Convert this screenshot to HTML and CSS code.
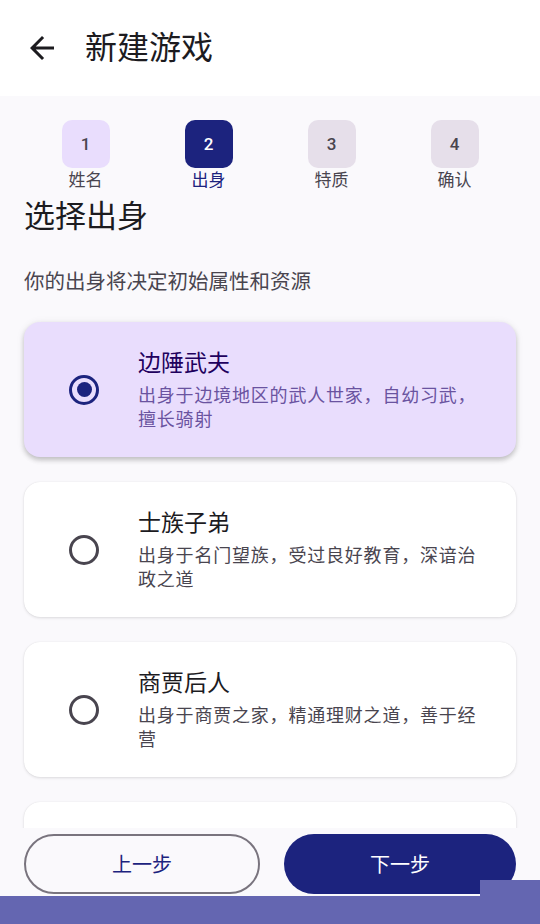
FILE: index.html
```html
<!DOCTYPE html>
<html lang="zh-CN">

<head>
    <meta charset="UTF-8">
    <meta name="viewport" content="width=device-width, initial-scale=1.0">
    <title>新建游戏</title>
    <link rel="stylesheet" href="styles.css">
</head>

<body>
    <div class="app">
        <!-- Top bar -->
        <header class="topbar">
            <button class="back" aria-label="返回">
                <svg viewBox="0 0 24 24" width="36" height="36">
                    <path d="M20 11H7.83l5.59-5.59L12 4l-8 8 8 8 1.41-1.41L7.83 13H20v-2z" fill="#1c1b1f" />
                </svg>
            </button>
            <h1>新建游戏</h1>
        </header>

        <main class="content">
            <!-- Steps -->
            <div class="steps">
                <div class="step done">
                    <div class="step-num">1</div>
                    <div class="step-label">姓名</div>
                </div>
                <div class="step active">
                    <div class="step-num">2</div>
                    <div class="step-label">出身</div>
                </div>
                <div class="step">
                    <div class="step-num">3</div>
                    <div class="step-label">特质</div>
                </div>
                <div class="step">
                    <div class="step-num">4</div>
                    <div class="step-label">确认</div>
                </div>
            </div>

            <h2 class="heading">选择出身</h2>
            <p class="subtitle">你的出身将决定初始属性和资源</p>

            <!-- Options -->
            <div class="options">
                <div class="option selected">
                    <span class="radio"></span>
                    <div class="option-text">
                        <div class="option-title">边陲武夫</div>
                        <div class="option-desc">出身于边境地区的武人世家，自幼习武，擅长骑射</div>
                    </div>
                </div>
                <div class="option">
                    <span class="radio"></span>
                    <div class="option-text">
                        <div class="option-title">士族子弟</div>
                        <div class="option-desc">出身于名门望族，受过良好教育，深谙治政之道</div>
                    </div>
                </div>
                <div class="option">
                    <span class="radio"></span>
                    <div class="option-text">
                        <div class="option-title">商贾后人</div>
                        <div class="option-desc">出身于商贾之家，精通理财之道，善于经营</div>
                    </div>
                </div>
                <!-- next option, scrolled below the fold -->
                <div class="option"></div>
            </div>
        </main>

        <!-- Bottom actions -->
        <footer class="actions">
            <button class="btn btn-outline">上一步</button>
            <button class="btn btn-filled">下一步</button>
        </footer>
        <div class="navbar"></div>
        <div class="navbar-glitch"></div>
    </div>
</body>

</html>
```

FILE: styles.css
```css
* {
    box-sizing: border-box;
}

body {
    margin: 0;
    font-family: Roboto, "Noto Sans CJK SC", sans-serif;
    background-color: #faf9fc;
    color: #1c1b1f;
}

.app {
    position: relative;
    width: 540px;
    height: 924px;
    display: flex;
    flex-direction: column;
    overflow: hidden;
}

.topbar {
    height: 96px;
    background: white;
    display: flex;
    align-items: center;
    padding-left: 24px;
    flex-shrink: 0;
}

.back {
    width: 36px;
    height: 36px;
    padding: 0;
    border: none;
    background: none;
    display: flex;
}

.topbar h1 {
    margin: 0 0 0 25px;
    font-size: 32px;
    font-weight: 400;
    line-height: 40px;
    color: #1c1b1f;
}

.content {
    flex: 1;
    overflow: hidden;
    padding: 24px 24px 0;
}

.steps {
    display: grid;
    grid-template-columns: repeat(4, 1fr);
}

.step {
    display: flex;
    flex-direction: column;
    align-items: center;
}

.step-num {
    width: 48px;
    height: 48px;
    border-radius: 10px;
    background: #e6dfea;
    color: #49454f;
    display: flex;
    align-items: center;
    justify-content: center;
    font-size: 17px;
    font-weight: 500;
}

.step.done .step-num {
    background: #e9ddfd;
}

.step.active .step-num {
    background: #1c237e;
    color: white;
}

.step-label {
    font-size: 17px;
    line-height: 24px;
    color: #49454f;
}

.step.active .step-label {
    color: #1c237e;
}

.heading {
    margin: 5px 0 0;
    font-size: 31px;
    font-weight: 400;
    line-height: 40px;
    color: #1c1b1f;
}

.subtitle {
    margin: 31px 0 0;
    font-size: 20.5px;
    line-height: 28px;
    color: #49454f;
}

.options {
    margin-top: 26px;
    display: flex;
    flex-direction: column;
    gap: 25px;
}

.option {
    height: 135px;
    flex-shrink: 0;
    background: white;
    border-radius: 16px;
    box-shadow: 0 1px 3px rgba(0, 0, 0, 0.12), 0 0 1px rgba(0, 0, 0, 0.1);
    display: flex;
    align-items: center;
    padding: 0 30px 0 45px;
}

.option.selected {
    background: #e9ddfd;
    box-shadow: 0 3px 5px rgba(0, 0, 0, 0.2), 0 1px 8px rgba(0, 0, 0, 0.08);
}

.radio {
    width: 30px;
    height: 30px;
    border-radius: 50%;
    border: 3px solid #49454f;
    flex-shrink: 0;
    position: relative;
}

.option.selected .radio {
    border-color: #1c237e;
}

.option.selected .radio::after {
    content: "";
    position: absolute;
    left: 4.5px;
    top: 4.5px;
    width: 15px;
    height: 15px;
    border-radius: 50%;
    background: #1c237e;
}

.option-text {
    margin-left: 39px;
}

.option-title {
    font-size: 23px;
    line-height: 32px;
    margin-bottom: 4px;
    color: #1c1b1f;
}

.option.selected .option-title {
    color: #21005d;
}

.option-desc {
    font-size: 18px;
    line-height: 24px;
    letter-spacing: 0.8px;
    color: #49454f;
}

.option.selected .option-desc {
    color: #6a53a0;
}

.actions {
    height: 68px;
    flex-shrink: 0;
    display: flex;
    gap: 24px;
    padding: 6px 24px 0;
    background: #faf9fc;
}

.btn {
    flex: 1 1 0;
    width: 0;
    height: 60px;
    padding: 0;
    border-radius: 30px;
    font-family: "Noto Sans CJK SC", sans-serif;
    font-size: 20px;
    line-height: 28px;
}

.btn-outline {
    background: transparent;
    border: 2px solid #79747e;
    color: #1c237e;
}

.btn-filled {
    background: #1c237e;
    border: none;
    color: white;
}

.navbar {
    height: 28px;
    flex-shrink: 0;
    background: #6466b1;
}

.navbar-glitch {
    position: absolute;
    right: 0;
    bottom: 28px;
    width: 60px;
    height: 16px;
    background: #6466b1;
}
```
